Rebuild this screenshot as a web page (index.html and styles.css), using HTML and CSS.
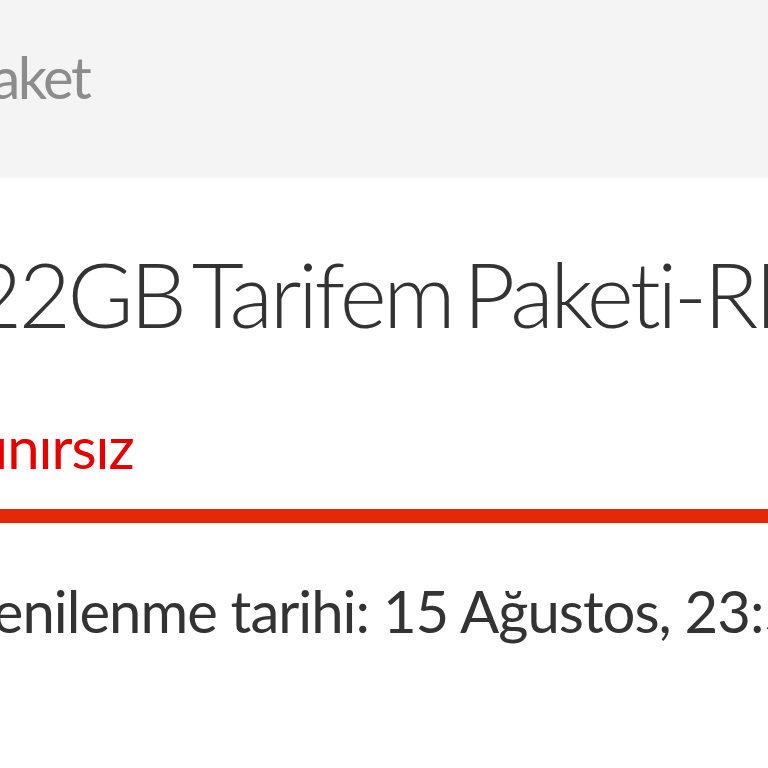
FILE: index.html
```html
<!DOCTYPE html>
<html lang="tr">
<head>
    <meta charset="UTF-8">
    <meta name="viewport" content="width=device-width, initial-scale=1.0">
    <title>Paket</title>
    <link rel="stylesheet" href="styles.css">
</head>
<body>
    <div class="screen">
        <header class="page-header">
            <h1>Paket</h1>
        </header>

        <section class="package">
            <h2 class="package-name">22GB Tarifem Paketi-RED</h2>
            <div class="package-amount">Sınırsız</div>
            <div class="usage-bar"><div class="usage-fill"></div></div>
            <p class="renewal">Yenilenme tarihi: 15 Ağustos, 23:59</p>
        </section>
    </div>
</body>
</html>
```

FILE: styles.css
```css
html, body {
    margin: 0;
    padding: 0;
    background-color: #fff;
    overflow: hidden;
}

body {
    font-family: Lato, "Liberation Sans", sans-serif;
    font-weight: 300;
    color: #333;
}

.screen {
    width: 768px;
    height: 768px;
    overflow: hidden;
}

.page-header {
    background-color: #f4f4f4;
    height: 178px;
    box-sizing: border-box;
    padding: 37px 0 0 0;
}

.page-header h1 {
    margin: 0 0 0 -40px;
    font-size: 58px;
    font-weight: 400;
    line-height: 80px;
    letter-spacing: -2.5px;
    color: #8c8c8c;
    white-space: nowrap;
}

.package {
    padding-top: 60px;
}

.package-name {
    margin: 0 0 0 -30px;
    font-size: 90px;
    font-weight: 300;
    line-height: 110px;
    letter-spacing: -3.5px;
    word-spacing: -10px;
    color: #333;
    white-space: nowrap;
}

.package-amount {
    margin: 64px 0 0 -36px;
    font-size: 58px;
    font-weight: 400;
    line-height: 70px;
    letter-spacing: -1px;
    color: #e60000;
    white-space: nowrap;
}

.usage-bar {
    margin-top: 27px;
    height: 14px;
    background-color: #fff;
}

.usage-fill {
    width: 100%;
    height: 100%;
    background-color: #e42808;
}

.renewal {
    margin: 53px 0 0 -36px;
    font-size: 58px;
    font-weight: 400;
    line-height: 70px;
    letter-spacing: -1px;
    color: #333;
    white-space: nowrap;
}
```
